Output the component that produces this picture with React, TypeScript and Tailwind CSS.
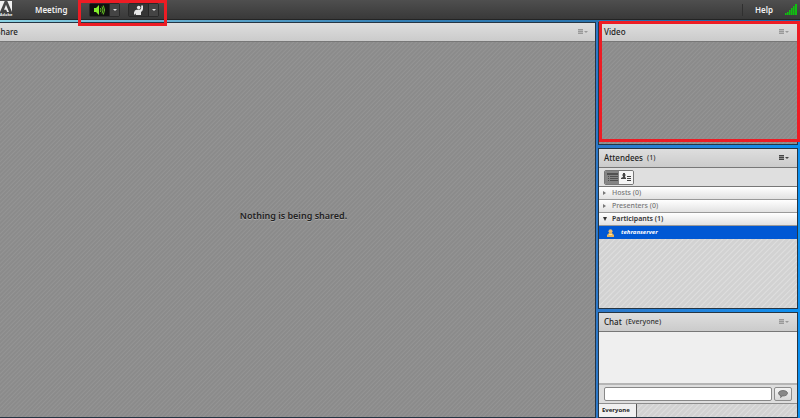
import { useState } from "react";
import type { ReactNode } from "react";

const darkStripes =
  "bg-[#8f8f8f] bg-[repeating-linear-gradient(135deg,#8b8b8b_0px,#8b8b8b_1px,#949494_2px,#8b8b8b_3px)]";
const lightStripes =
  "bg-[#d6d6d6] bg-[repeating-linear-gradient(135deg,#d2d2d2_0px,#d2d2d2_2px,#dedede_3px,#d2d2d2_4px)]";

type PodProps = {
  title: string;
  note?: string;
  dimMenu?: boolean;
  className?: string;
  headerClass?: string;
  children: ReactNode;
};

function Pod({ title, note, dimMenu, className = "", headerClass = "pr-1 pl-[5px]", children }: PodProps) {
  return (
    <section className={`flex min-h-0 flex-col border border-[#263543] ${className}`}>
      <header
        className={`flex h-[19px] shrink-0 items-center border-b border-[#777] bg-linear-to-b from-[#dedede] to-[#cbcbcb] ${headerClass}`}
      >
        <h2 className="text-[8px] font-medium text-[#222]">{title}</h2>
        {note && <span className="ml-1 text-[7px] font-medium text-[#333]">{note}</span>}
        <button
          type="button"
          aria-label={`${title} options`}
          className={`mr-1 ml-auto ${dimMenu ? "text-[#999]" : "text-[#444]"}`}
        >
          <MenuIcon />
        </button>
      </header>
      {children}
    </section>
  );
}

function MenuIcon() {
  return (
    <svg width="10" height="6" viewBox="0 0 10 6" fill="currentColor">
      <path d="M0 0h5v1H0zM0 2h5v1H0zM0 4h5v1H0z" />
      <path fillOpacity=".5" d="M0 1h5v1H0zM0 3h5v1H0z" />
      <path d="M6 2h4L8 4z" />
    </svg>
  );
}

function AdobeLogo() {
  return (
    <div className="flex w-3 shrink-0 flex-col items-center">
      <svg width="12" height="11" viewBox="0 0 12 11">
        <path
          fill="#f2f2f2"
          d="M0 0h4.7L0 11zM7.3 0H12v11zM6 3.7 9 11H7.1L6.2 8.7H4z"
        />
      </svg>
      <span className="text-[4px] leading-[6px] font-bold text-[#eee]">Adobe</span>
    </div>
  );
}

function SpeakerIcon() {
  return (
    <svg width="11" height="10" viewBox="0 0 11 10" fill="none">
      <path fill="#83ed2b" d="M0 3h2l3-3v10L2 7H0z" />
      <path stroke="#64bd25" d="M6.5 3q1 2 0 4M8 1.5q2 3.5 0 7M9.3.5q2.6 4.5 0 9" />
    </svg>
  );
}

function RaiseHandIcon() {
  return (
    <svg width="10" height="10" viewBox="0 0 10 10" fill="#e8e8e8">
      <circle cx="4.7" cy="2.6" r="1.8" />
      <path d="M0 7.5Q.5 5 2.5 4.8h3Q7 4.500 7.200 3V.5H9V4Q8.800 6 7 7v3H2V8L1.300 9.500H0z" />
    </svg>
  );
}

function SplitButton({ label, active, children }: { label: string; active?: boolean; children: ReactNode }) {
  return (
    <div className="flex h-[14px] w-[31px] rounded-xs border border-[#292929] bg-[#383838]">
      <button
        type="button"
        aria-label={label}
        className={`flex flex-1 items-center justify-center ${active ? "bg-[#101010]" : "bg-[#353535]"}`}
      >
        {children}
      </button>
      <button
        type="button"
        aria-label={`${label} options`}
        className="flex w-[10px] items-center justify-center border-l border-[#242424] bg-[#444] text-[#ddd]"
      >
        <svg width="4" height="2" viewBox="0 0 4 2" fill="currentColor">
          <path d="M0 0h4L2 2z" />
        </svg>
      </button>
    </div>
  );
}

function SignalIcon() {
  return (
    <svg width="12" height="11" viewBox="0 0 12 11" fill="#10c010">
      <path d="M0 9h1.600v2H0zM2 8h1.600v3H2zM4 6h1.600v5H4zM6 4h1.600v7H6zM8 2h1.600v9H8zM10 0h2v11h-2z" />
    </svg>
  );
}

function TopBar() {
  return (
    <nav className="flex h-5 shrink-0 items-center border-b border-[#242424] bg-linear-to-b from-[#4f4f4f] to-[#393939] text-[8px] font-semibold text-[#f2f2f2]">
      <AdobeLogo />
      <button type="button" className="ml-[23px] w-8 text-left">
        Meeting
      </button>
      <div className="ml-[22px] flex gap-2">
        <SplitButton label="Speaker" active>
          <SpeakerIcon />
        </SplitButton>
        <SplitButton label="Raise hand">
          <RaiseHandIcon />
        </SplitButton>
      </div>
      <div className="mr-[3px] ml-auto flex items-center">
        <span className="h-3 w-px bg-[#303030]" />
        <button type="button" className="mx-3 w-[18px] text-left">
          Help
        </button>
        <SignalIcon />
      </div>
    </nav>
  );
}

const groups = [
  { name: "Hosts", members: [] },
  { name: "Presenters", members: [] },
  { name: "Participants", members: ["tehranserver"] },
];

function Attendees() {
  return (
    <Pod title="Attendees" note="(1)" className={`flex-1 ${lightStripes}`}>
      <div className="flex h-[19px] shrink-0 items-center border-b border-[#777] bg-[#dfdfdf] pr-1 pl-[5px]">
        <div className="flex h-[15px] w-[30px] overflow-hidden rounded-xs border border-[#777]">
          <button type="button" aria-label="List view" className="flex flex-1 items-center justify-center bg-[#858585]">
            <svg width="11" height="9" viewBox="0 0 11 9" fill="#505050">
              <path d="M0 0h11v2H0zM1 3h1v1H1zM3 3h8v1H3zM1 5h1v1H1zM3 5h8v1H3zM1 7h1v1H1zM3 7h8v1H3z" />
            </svg>
          </button>
          <button type="button" aria-label="Status view" className="flex flex-1 items-center justify-center bg-[#f5f5f5]">
            <svg width="10" height="9" viewBox="0 0 10 9" fill="#444">
              <path d="M2 0h2v4l1 1v1H0V5l2-1zM6 3h4v1H6zM6 5h4v1H6zM6 7h4v1H6z" />
              <circle cx="3" cy="2" r="1.6" />
            </svg>
          </button>
        </div>
      </div>
      <ul>
        {groups.map(({ name, members }) => {
          const open = members.length > 0;
          return (
            <li key={name}>
              <button
                type="button"
                aria-expanded={open}
                className={`flex h-[13px] w-full items-center border-b border-[#999] bg-linear-to-b from-white to-[#e2e2e2] px-1 text-[7px] ${
                  open ? "font-semibold text-[#333]" : "font-medium text-[#777]"
                }`}
              >
                <svg className="mr-[5px]" width="4" height="4" viewBox="0 0 4 4" fill="currentColor">
                  <path d={open ? "M0 0h4L2 4z" : "M0 0l3 2-3 2z"} />
                </svg>
                {name} ({members.length})
              </button>
              {members.map((member) => (
                <div key={member} className="flex h-[13px] items-center bg-[#0058d4] pl-2 text-[6px] font-bold text-white italic">
                  <svg className="mr-[7px]" width="7" height="8" viewBox="0 0 7 8">
                    <circle cx="3.5" cy="2.3" r="2" fill="#e9ba72" />
                    <path fill="#e4b45e" d="M2 3h3v1l2 2v2H0V6l2-2z" />
                    <path fill="#ffe2a0" d="M2 5h3v1H2z" />
                  </svg>
                  {member}
                </div>
              ))}
            </li>
          );
        })}
      </ul>
    </Pod>
  );
}

function Chat() {
  const [message, setMessage] = useState("");

  return (
    <Pod title="Chat" note="(Everyone)" dimMenu className="h-[106px] shrink-0 bg-[#efefef]">
      <div className="flex-1" />
      <form
        className="flex h-5 shrink-0 items-center gap-[2px] border-t-2 border-[#b5b5b5] bg-[#dedede] pr-[5px] pl-[5px]"
        onSubmit={(e) => {
          e.preventDefault();
          setMessage("");
        }}
      >
        <input
          aria-label="Chat message"
          value={message}
          onChange={(e) => setMessage(e.target.value)}
          className="h-[14px] min-w-0 flex-1 rounded-xs border border-[#888] bg-white px-1 text-[8px] outline-none"
        />
        <button
          type="submit"
          aria-label="Send message"
          className="flex h-[14px] w-[18px] items-center justify-center rounded-xs border border-[#8d8d8d] bg-linear-to-b from-[#f4f4f4] to-[#d8d8d8]"
        >
          <svg width="10" height="8" viewBox="0 0 10 8">
            <path
              fill="#888"
              stroke="#5d5d5d"
              strokeWidth=".7"
              d="M5 .5C2.5.5.5 1.6.5 3.2c0 1.2 1 2 2.5 2.5L2.5 7.5l2-1.5H5c2.5 0 4.500-1.200 4.500-2.800S7.500.5 5 .5z"
            />
          </svg>
        </button>
      </form>
      <div className={`flex h-[14px] shrink-0 border-t border-[#8d8d8d] ${lightStripes}`}>
        <button type="button" className="w-[38px] border-r border-[#555] bg-[#f0f0f0] pl-[3px] text-left text-[6px] font-bold text-[#222]">
          Everyone
        </button>
      </div>
    </Pod>
  );
}

export default function App() {
  return (
    <div className="relative flex h-screen flex-col overflow-hidden bg-linear-to-r from-[#2d78c8] from-75% to-[#0a90f0] font-['Noto_Sans','Open_Sans',sans-serif]">
      <TopBar />
      <div className="h-[2px] shrink-0 bg-linear-to-r from-[#8bd3e4] via-[#347fb4] to-[#1e68a8]" />
      <main className="flex min-h-0 flex-1 gap-[2px] pr-[2px]">
        <Pod title="Share" dimMenu headerClass="pr-[3px]" className={`-ml-[5px] flex-1 ${darkStripes}`}>
          <div className="flex flex-1 items-center justify-center pr-1 pb-7">
            <p className="text-[9px] font-semibold text-[#222] [text-shadow:0_1px_0_#aaa]">Nothing is being shared.</p>
          </div>
        </Pod>
        <div className="flex w-[200px] shrink-0 flex-col gap-[3px]">
          <Pod title="Video" dimMenu className={`h-[123px] shrink-0 ${darkStripes}`}>
            <div className="flex-1" />
          </Pod>
          <Attendees />
          <Chat />
        </div>
      </main>

      {/* highlight frames over the toolbar buttons and the video pod */}
      <div className="pointer-events-none absolute top-0 left-[78px] h-[26px] w-[89px] border-3 border-[#ed1c24]" />
      <div className="pointer-events-none absolute top-[21px] right-0 h-[121px] w-[201px] border-3 border-[#ed1c24]" />
    </div>
  );
}
